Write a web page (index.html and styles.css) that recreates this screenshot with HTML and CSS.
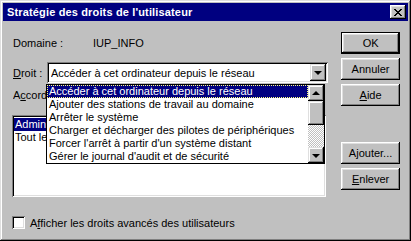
FILE: index.html
```html
<!DOCTYPE html>
<html lang="fr">
<head>
<meta charset="utf-8">
<link rel="stylesheet" href="styles.css">
</head>
<body>
<div class="window">
  <div class="titlebar">
    <span class="title">Stratégie des droits de l'utilisateur</span>
    <span class="close"><svg width="8" height="7" viewBox="0 0 8 7"><path d="M0 0h2v1h1v1h2v-1h1v-1h2v1h-1v1h-1v1h-1v1h1v1h1v1h1v1h-2v-1h-1v-1h-2v1h-1v1h-2v-1h1v-1h1v-1h1v-1h-1v-1h-1v-1h-1z" fill="#000"/></svg></span>
  </div>
  <div class="content">
    <div class="left">
      <div class="row domaine">
        <span class="lbl-dom">Domaine :</span>
        <span>IUP_INFO</span>
      </div>
      <div class="row droit">
        <span class="lbl-droit"><u>D</u>roit :</span>
        <div class="combo">
          <div class="combo-field">Accéder à cet ordinateur depuis le réseau</div>
          <div class="arrow-btn"><span class="tri-down"></span></div>
          <div class="dropdown">
            <ul class="items">
              <li class="sel">Accéder à cet ordinateur depuis le réseau</li>
              <li>Ajouter des stations de travail au domaine</li>
              <li>Arrêter le système</li>
              <li>Charger et décharger des pilotes de périphériques</li>
              <li>Forcer l'arrêt à partir d'un système distant</li>
              <li>Gérer le journal d'audit et de sécurité</li>
            </ul>
            <div class="scrollbar">
              <div class="sb-btn"><span class="tri-up"></span></div>
              <div class="sb-thumb"></div>
              <div class="sb-track"></div>
              <div class="sb-btn"><span class="tri-down"></span></div>
            </div>
          </div>
        </div>
      </div>
      <div class="lbl-accord"><span class="clip">A<u>c</u>corder à :</span></div>
      <div class="listbox">
        <div class="lb-item sel"><span class="clip">Administrateurs</span></div>
        <div class="lb-item"><span class="clip">Tout le monde</span></div>
      </div>
      <div class="check-row">
        <span class="checkbox"></span>
        <span>A<u>f</u>ficher les droits avancés des utilisateurs</span>
      </div>
    </div>
    <div class="right">
      <div class="btn default">OK</div>
      <div class="btn">Annuler</div>
      <div class="btn"><u>A</u>ide</div>
      <div class="btn spaced">A<u>j</u>outer...</div>
      <div class="btn"><u>E</u>nlever</div>
    </div>
  </div>
</div>
</body>
</html>
```

FILE: styles.css
```css
* { box-sizing: border-box; }
html, body { margin: 0; padding: 0; background: #c0c0c0; }
body {
  font-family: "Liberation Sans", Arial, sans-serif;
  font-size: 11px;
  color: #000;
}
u { text-decoration: underline; text-underline-offset: 1px; }

.window {
  width: 411px;
  height: 241px;
  padding: 3px;
  display: flex;
  flex-direction: column;
  background: #c0c0c0;
  box-shadow: inset -1px -1px #000, inset 1px 1px #dfdfdf, inset -2px -2px #808080, inset 2px 2px #fff;
}

.titlebar {
  height: 18px;
  background: #000080;
  display: flex;
  align-items: center;
  justify-content: space-between;
  padding: 0 2px 0 4px;
}
.title {
  color: #fff;
  font-weight: bold;
  font-size: 11px;
  letter-spacing: 0.15px;
}
.close {
  width: 16px;
  height: 14px;
  background: #c0c0c0;
  display: flex;
  align-items: center;
  justify-content: center;
  box-shadow: inset -1px -1px #000, inset 1px 1px #fff, inset -2px -2px #808080, inset 2px 2px #dfdfdf;
}

.content {
  flex: 1;
  display: flex;
  padding: 11px 8px 0 9px;
}
.left {
  width: 317px;
  padding-top: 4px;
  display: flex;
  flex-direction: column;
}
.right {
  margin-left: 13px;
  width: 59px;
  display: flex;
  flex-direction: column;
  gap: 4px;
}

.row { display: flex; align-items: center; }
.domaine { height: 13px; padding-left: 1px; }
.lbl-dom { width: 80px; }

.droit { margin-top: 13px; height: 21px; }
.lbl-droit { width: 35px; padding-left: 1px; }
.combo {
  position: relative;
  width: 281px;
  height: 21px;
  background: #fff;
  box-shadow: inset 1px 1px #808080, inset -1px -1px #fff, inset 2px 2px #000, inset -2px -2px #dfdfdf;
  display: flex;
  align-items: center;
  padding: 2px 2px 2px 4px;
}
.combo-field { flex: 1; white-space: nowrap; overflow: hidden; }
.arrow-btn {
  width: 16px;
  height: 17px;
  background: #c0c0c0;
  display: flex;
  align-items: center;
  justify-content: center;
  box-shadow: inset -1px -1px #000, inset 1px 1px #dfdfdf, inset -2px -2px #808080, inset 2px 2px #fff;
}
.tri-down {
  width: 0; height: 0;
  border-left: 4px solid transparent;
  border-right: 4px solid transparent;
  border-top: 4px solid #000;
  margin-top: 1px;
}
.tri-up {
  width: 0; height: 0;
  border-left: 4px solid transparent;
  border-right: 4px solid transparent;
  border-bottom: 4px solid #000;
  margin-bottom: 1px;
}

.dropdown {
  position: absolute;
  top: 22px;
  left: -1px;
  width: 279px;
  height: 80px;
  background: #fff;
  border: 1px solid #000;
  display: flex;
  z-index: 5;
}
.items {
  list-style: none;
  margin: 0;
  padding: 0;
  flex: 1;
}
.items li {
  height: 13px;
  line-height: 13px;
  padding-left: 2px;
  white-space: nowrap;
  overflow: hidden;
}
.items li.sel {
  background: #000080;
  color: #fff;
  outline: 1px dotted #ffff80;
  outline-offset: -1px;
}
.scrollbar {
  width: 16px;
  display: flex;
  flex-direction: column;
}
.sb-btn, .sb-thumb {
  background: #c0c0c0;
  box-shadow: inset -1px -1px #000, inset 1px 1px #dfdfdf, inset -2px -2px #808080, inset 2px 2px #fff;
}
.sb-btn {
  height: 16px;
  display: flex;
  align-items: center;
  justify-content: center;
}
.sb-thumb { height: 24px; }
.sb-track {
  flex: 1;
  background: repeating-conic-gradient(#fff 0 25%, #c0c0c0 0 50%) 0 0 / 2px 2px;
}

.clip {
  display: block;
  overflow: hidden;
  white-space: nowrap;
}
.lbl-accord { margin-top: 6px; height: 13px; line-height: 13px; padding-left: 1px; }
.lbl-accord .clip { width: 34px; }
.listbox {
  margin-top: 13px;
  width: 314px;
  height: 82px;
  background: #fff;
  padding: 3px 2px 2px;
  box-shadow: inset 1px 1px #808080, inset -1px -1px #fff, inset 2px 2px #000, inset -2px -2px #dfdfdf;
}
.lb-item { height: 13px; line-height: 13px; padding-left: 1px; }
.lb-item .clip { width: 33px; }
.lb-item.sel { background: #000080; color: #fff; width: 34px; }

.check-row {
  margin-top: 19px;
  display: flex;
  align-items: center;
  gap: 5px;
}
.checkbox {
  width: 13px;
  height: 13px;
  background: #fff;
  box-shadow: inset 1px 1px #808080, inset -1px -1px #fff, inset 2px 2px #000, inset -2px -2px #dfdfdf;
}

.btn {
  height: 22px;
  display: flex;
  align-items: center;
  justify-content: center;
  background: #c0c0c0;
  box-shadow: inset -1px -1px #000, inset 1px 1px #fff, inset -2px -2px #808080, inset 2px 2px #dfdfdf;
}
.btn.default {
  border: 1px solid #000;
}
.btn.spaced { margin-top: 32px; }
```
